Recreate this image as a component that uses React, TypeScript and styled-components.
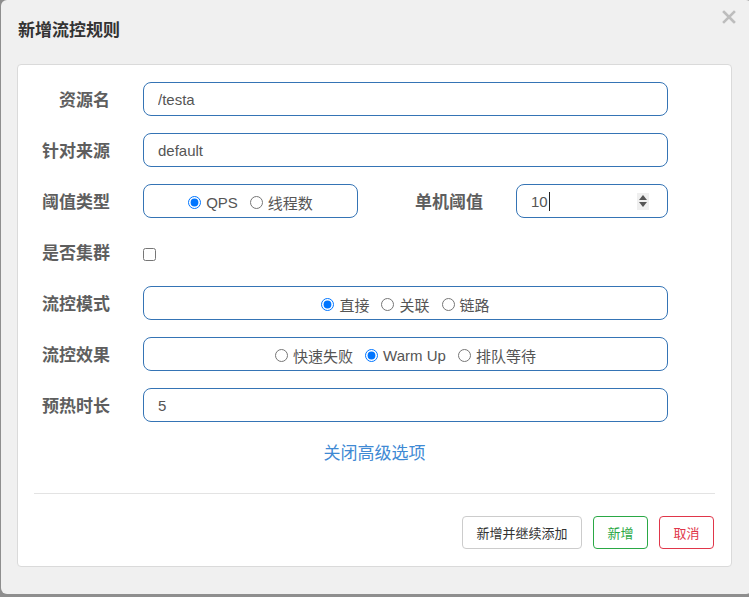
import React from "react";
import styled, { createGlobalStyle } from "styled-components";

const GlobalStyle = createGlobalStyle`
  html, body {
    margin: 0;
    padding: 0;
    background: #8e8e8e;
    overflow: hidden;
  }
  body {
    font-family: "Liberation Sans", "Noto Sans CJK SC", sans-serif;
  }
  * { box-sizing: border-box; }
`;

const Modal = styled.div`
  width: 751px;
  height: 594px;
  margin-left: 1px;
  background: #f0f0f0;
  border-radius: 6px;
  display: flex;
  flex-direction: column;
`;

const Header = styled.div`
  height: 64px;
  display: flex;
  align-items: flex-start;
  justify-content: space-between;
  padding: 17px 0 0 17px;
`;

const Title = styled.h4`
  margin: 0;
  font-family: "Noto Sans CJK SC", sans-serif;
  font-size: 17px;
  font-weight: 700;
  color: #333;
  line-height: 24px;
`;

const Close = styled.button`
  border: none;
  background: transparent;
  padding: 0;
  margin: -7px 16px 0 0;
  width: 14px;
  height: 14px;
  display: flex;
  cursor: pointer;
`;

const Panel = styled.div`
  width: 715px;
  margin-left: 16px;
  background: #fff;
  border: 1px solid #dadada;
  border-radius: 4px;
  padding: 17px 0 17px 0;
`;

const Form = styled.div`
  display: flex;
  flex-direction: column;
  gap: 17px;
`;

const Row = styled.div`
  display: grid;
  grid-template-columns: 92px 525px;
  column-gap: 33px;
  align-items: center;
  height: 34px;
`;

const Label = styled.label<{ $w?: number }>`
  font-family: "Noto Sans CJK SC", sans-serif;
  font-size: 17px;
  font-weight: 700;
  color: #5e5e5e;
  text-align: right;
  line-height: 24px;
  ${(p) => (p.$w ? `width: ${p.$w}px; flex: none;` : "")}
`;

const TextInput = styled.input`
  width: 100%;
  height: 34px;
  border: 1px solid #3574b5;
  border-radius: 8px;
  padding: 0 14px;
  font-family: "Liberation Sans", "Noto Sans CJK SC", sans-serif;
  font-size: 15px;
  color: #555;
  outline: none;
  background: #fff;
`;

const Split = styled.div`
  display: flex;
  align-items: center;
  height: 34px;
  gap: 33px;
`;

const RadioBox = styled.div<{ $w?: number }>`
  height: 34px;
  border: 1px solid #3574b5;
  border-radius: 8px;
  display: flex;
  align-items: center;
  justify-content: center;
  gap: 12px;
  padding-top: 2px;
  ${(p) => (p.$w ? `width: ${p.$w}px; flex: none;` : "width: 100%;")}
`;

const RadioItem = styled.label`
  display: flex;
  align-items: center;
  gap: 5px;
  font-family: "Liberation Sans", "Noto Sans CJK SC", sans-serif;
  font-size: 15px;
  color: #555;
  white-space: nowrap;
`;

const Radio = styled.input.attrs({ type: "radio" })`
  margin: 0;
  width: 13px;
  height: 13px;
  accent-color: #0075ff;
`;

const NumberBox = styled.div`
  flex: 1;
  height: 34px;
  border: 1px solid #3574b5;
  border-radius: 8px;
  display: flex;
  align-items: center;
  padding: 0 18px 0 14px;
  font-family: "Liberation Sans", "Noto Sans CJK SC", sans-serif;
  font-size: 15px;
  color: #555;
`;

const Caret = styled.span`
  display: inline-block;
  width: 1px;
  height: 19px;
  background: #222;
  margin-left: 1px;
`;

const Spacer = styled.span`
  flex: 1;
`;

const Spinner = styled.span`
  width: 12px;
  height: 17px;
  background: #efefef;
  display: flex;
  flex-direction: column;
  align-items: center;
  justify-content: center;
  gap: 2px;
`;

const Checkbox = styled.input.attrs({ type: "checkbox" })`
  margin: 4px 0 0 0;
  width: 13px;
  height: 13px;
  justify-self: start;
`;

const LinkRow = styled.div`
  display: flex;
  justify-content: center;
  margin-top: 18px;
`;

const Link = styled.a`
  font-family: "Noto Sans CJK SC", sans-serif;
  font-size: 17px;
  color: #3f8ad4;
  line-height: 24px;
  text-decoration: none;
  cursor: pointer;
`;

const Divider = styled.hr`
  border: none;
  border-top: 1px solid #e3e3e3;
  margin: 29px 16px 0 16px;
`;

const Footer = styled.div`
  display: flex;
  justify-content: flex-end;
  gap: 11px;
  padding: 22px 17px 0 0;
`;

const Button = styled.button<{ $tone: "default" | "success" | "danger" }>`
  height: 33px;
  padding: 0 13.5px;
  background: #fff;
  border-radius: 4px;
  font-family: "Noto Sans CJK SC", sans-serif;
  font-size: 13px;
  cursor: pointer;
  border: 1px solid
    ${(p) => (p.$tone === "success" ? "#2aa845" : p.$tone === "danger" ? "#e0364a" : "#cccccc")};
  color: ${(p) => (p.$tone === "success" ? "#2aa845" : p.$tone === "danger" ? "#e0364a" : "#333")};
`;

export default function App() {
  return (
    <>
      <GlobalStyle />
      <Modal>
        <Header>
          <Title>新增流控规则</Title>
          <Close aria-label="close">
            <svg width="14" height="14" viewBox="0 0 14 14">
              <path d="M2 2 L12 12 M12 2 L2 12" stroke="#bdbdbd" strokeWidth="2.6" strokeLinecap="square" />
            </svg>
          </Close>
        </Header>
        <Panel>
          <Form>
            <Row>
              <Label>资源名</Label>
              <TextInput defaultValue="/testa" />
            </Row>
            <Row>
              <Label>针对来源</Label>
              <TextInput defaultValue="default" />
            </Row>
            <Row>
              <Label>阈值类型</Label>
              <Split>
                <RadioBox $w={215}>
                  <RadioItem>
                    <Radio name="grade" defaultChecked />
                    QPS
                  </RadioItem>
                  <RadioItem>
                    <Radio name="grade" />
                    线程数
                  </RadioItem>
                </RadioBox>
                <Label $w={92}>单机阈值</Label>
                <NumberBox>
                  10
                  <Caret />
                  <Spacer />
                  <Spinner>
                    <svg width="8" height="5" viewBox="0 0 8 5">
                      <path d="M0 5 L4 0 L8 5 Z" fill="#555" />
                    </svg>
                    <svg width="8" height="5" viewBox="0 0 8 5">
                      <path d="M0 0 L4 5 L8 0 Z" fill="#555" />
                    </svg>
                  </Spinner>
                </NumberBox>
              </Split>
            </Row>
            <Row>
              <Label>是否集群</Label>
              <Checkbox />
            </Row>
            <Row>
              <Label>流控模式</Label>
              <RadioBox>
                <RadioItem>
                  <Radio name="strategy" defaultChecked />
                  直接
                </RadioItem>
                <RadioItem>
                  <Radio name="strategy" />
                  关联
                </RadioItem>
                <RadioItem>
                  <Radio name="strategy" />
                  链路
                </RadioItem>
              </RadioBox>
            </Row>
            <Row>
              <Label>流控效果</Label>
              <RadioBox>
                <RadioItem>
                  <Radio name="behavior" />
                  快速失败
                </RadioItem>
                <RadioItem>
                  <Radio name="behavior" defaultChecked />
                  Warm Up
                </RadioItem>
                <RadioItem>
                  <Radio name="behavior" />
                  排队等待
                </RadioItem>
              </RadioBox>
            </Row>
            <Row>
              <Label>预热时长</Label>
              <TextInput defaultValue="5" />
            </Row>
          </Form>
          <LinkRow>
            <Link>关闭高级选项</Link>
          </LinkRow>
          <Divider />
          <Footer>
            <Button $tone="default">新增并继续添加</Button>
            <Button $tone="success">新增</Button>
            <Button $tone="danger">取消</Button>
          </Footer>
        </Panel>
      </Modal>
    </>
  );
}
